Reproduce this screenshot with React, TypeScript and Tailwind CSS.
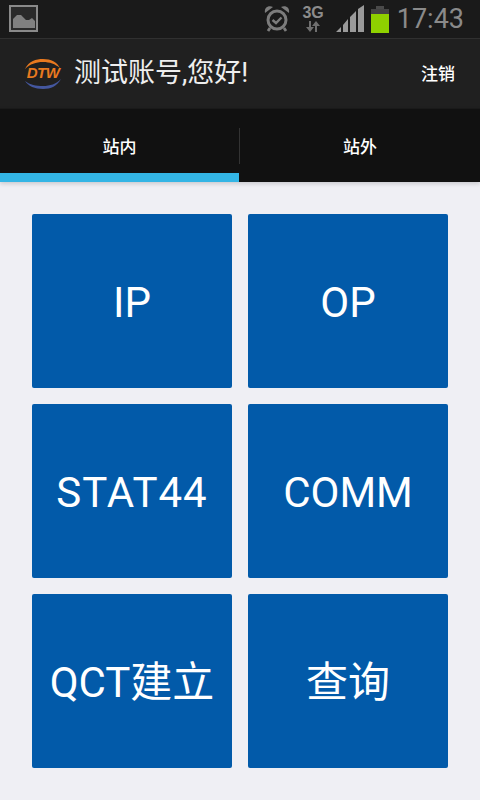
const tiles = ["IP", "OP", "STAT44", "COMM", "QCT建立", "查询"];

const font = { fontFamily: '"Roboto", "Noto Sans CJK SC", sans-serif' };

const PictureIcon = () => (
  <svg width="30" height="28" viewBox="0 0 30 28">
    <rect x="1" y="1" width="27" height="25" fill="#2a2a2a" stroke="#8a8a8a" strokeWidth="2" />
    <path d="M4 23V14L8 10L12 10L17 15L20 15L23 13L26 16V23Z" fill="#808080" />
  </svg>
);

const AlarmIcon = () => (
  <svg width="26" height="28" viewBox="0 0 26 28" fill="none">
    <circle cx="13" cy="15" r="9" stroke="#7c7c7c" strokeWidth="3" />
    <path d="M8.5 15L12 18L17.5 12.5" stroke="#7c7c7c" strokeWidth="2.4" />
    <path d="M1 8C0 3 4 0 9 2ZM25 8C26 3 22 0 17 2Z" fill="#7c7c7c" />
    <path d="M6 23L4 26M20 23L22 26" stroke="#7c7c7c" strokeWidth="2.8" />
  </svg>
);

const SignalIcon = () => (
  <svg width="29" height="28" viewBox="0 0 29 28">
    <path d="M0 27L5 22V27ZM7 27V20L12 14V27ZM14 27V12L20 6V27ZM22 27V4L28 0V27Z" fill="#9a9a9a" />
  </svg>
);

const NetworkIcon = () => (
  <div className="flex flex-col items-center">
    <span className="text-[16px] leading-[15px] font-bold text-[#8c8c8c]" style={{ fontFamily: '"Liberation Sans", sans-serif' }}>3G</span>
    <svg width="16" height="12" viewBox="0 0 16 12" className="mt-[1px]">
      <path d="M4 0H6V6H9L5 11L1 6H4ZM10 11H12V5H15L11 0L7 5H10Z" fill="#6f6f6f" />
    </svg>
  </div>
);

const BatteryIcon = () => (
  <div className="flex flex-col items-center mt-[1px]">
    <div className="w-[8px] h-[3px] bg-[#4a4a4a]" />
    <div className="w-[18px] h-[24px] bg-[#444] flex flex-col justify-end">
      <div className="h-[19px] bg-[#8fd100]" />
    </div>
  </div>
);

const Logo = () => (
  <div className="relative w-[38px] h-[32px]">
    <svg width="38" height="32" viewBox="0 0 38 32" className="absolute inset-0">
      <path d="M1 11C5 3 12 1 19 1C27 1 33 4 36 10C31 6 26 4 19 4C12 4 6 6 1 11Z" fill="#e8791f" />
      <path d="M1 23C6 27 12 28 19 28C26 28 32 26 37 21C33 28 27 31 19 31C11 31 4 28 1 23Z" fill="#44579f" />
    </svg>
    <span className="absolute inset-x-0 top-[7px] text-center text-[15px] leading-[16px] italic font-bold text-[#e8791f] tracking-[-0.5px]" style={{ fontFamily: '"Liberation Sans", sans-serif' }}>DTW</span>
  </div>
);

export default function App() {
  return (
    <div className="w-[480px] h-[800px] flex flex-col bg-[#efeff4] overflow-hidden" style={font}>
      {/* status bar */}
      <div className="h-[39px] shrink-0 flex items-center bg-[#1a1a1a] border-b border-[#303030] pl-[9px] pr-[16px]">
        <PictureIcon />
        <div className="ml-auto flex items-center">
          <AlarmIcon />
          <div className="ml-[12px]"><NetworkIcon /></div>
          <div className="ml-[12px]"><SignalIcon /></div>
          <div className="ml-[6px]"><BatteryIcon /></div>
          <span className="ml-[8px] text-[27px] leading-[30px] text-[#8a8a8a]">17:43</span>
        </div>
      </div>

      {/* action bar */}
      <div className="h-[69px] shrink-0 flex items-center bg-[#202020] pl-[24px] pr-[25px]">
        <Logo />
        <span className="ml-[12px] text-[27px] text-[#eeeeee]">测试账号,您好!</span>
        <span className="ml-auto pt-[2px] text-[17px] font-medium text-white">注销</span>
      </div>

      {/* tabs */}
      <div className="h-[74px] shrink-0 flex bg-[#111111] border-t border-[#1a1a1a] shadow-[0_2px_4px_rgba(0,0,0,0.15)]">
        <div className="w-[239px] flex flex-col">
          <div className="h-[64px] pt-[14px] flex items-center justify-center text-[17px] font-medium text-white">站内</div>
          <div className="h-[9px] bg-[#33b5e5]" />
        </div>
        <div className="w-px h-[36px] mt-[19px] bg-[#333333]" />
        <div className="flex-1 flex flex-col">
          <div className="h-[64px] pt-[14px] flex items-center justify-center text-[17px] font-medium text-white">站外</div>
        </div>
      </div>

      {/* tiles */}
      <div className="grid grid-cols-2 gap-4 px-[32px] pt-[32px]">
        {tiles.map((t) => (
          <div key={t} className={`h-[174px] pt-[3px] flex items-center justify-center rounded-[2px] bg-[#025aa9] text-[42px] text-white ${t === "STAT44" ? "tracking-[1px]" : ""}`}>
            {t}
          </div>
        ))}
      </div>
    </div>
  );
}
